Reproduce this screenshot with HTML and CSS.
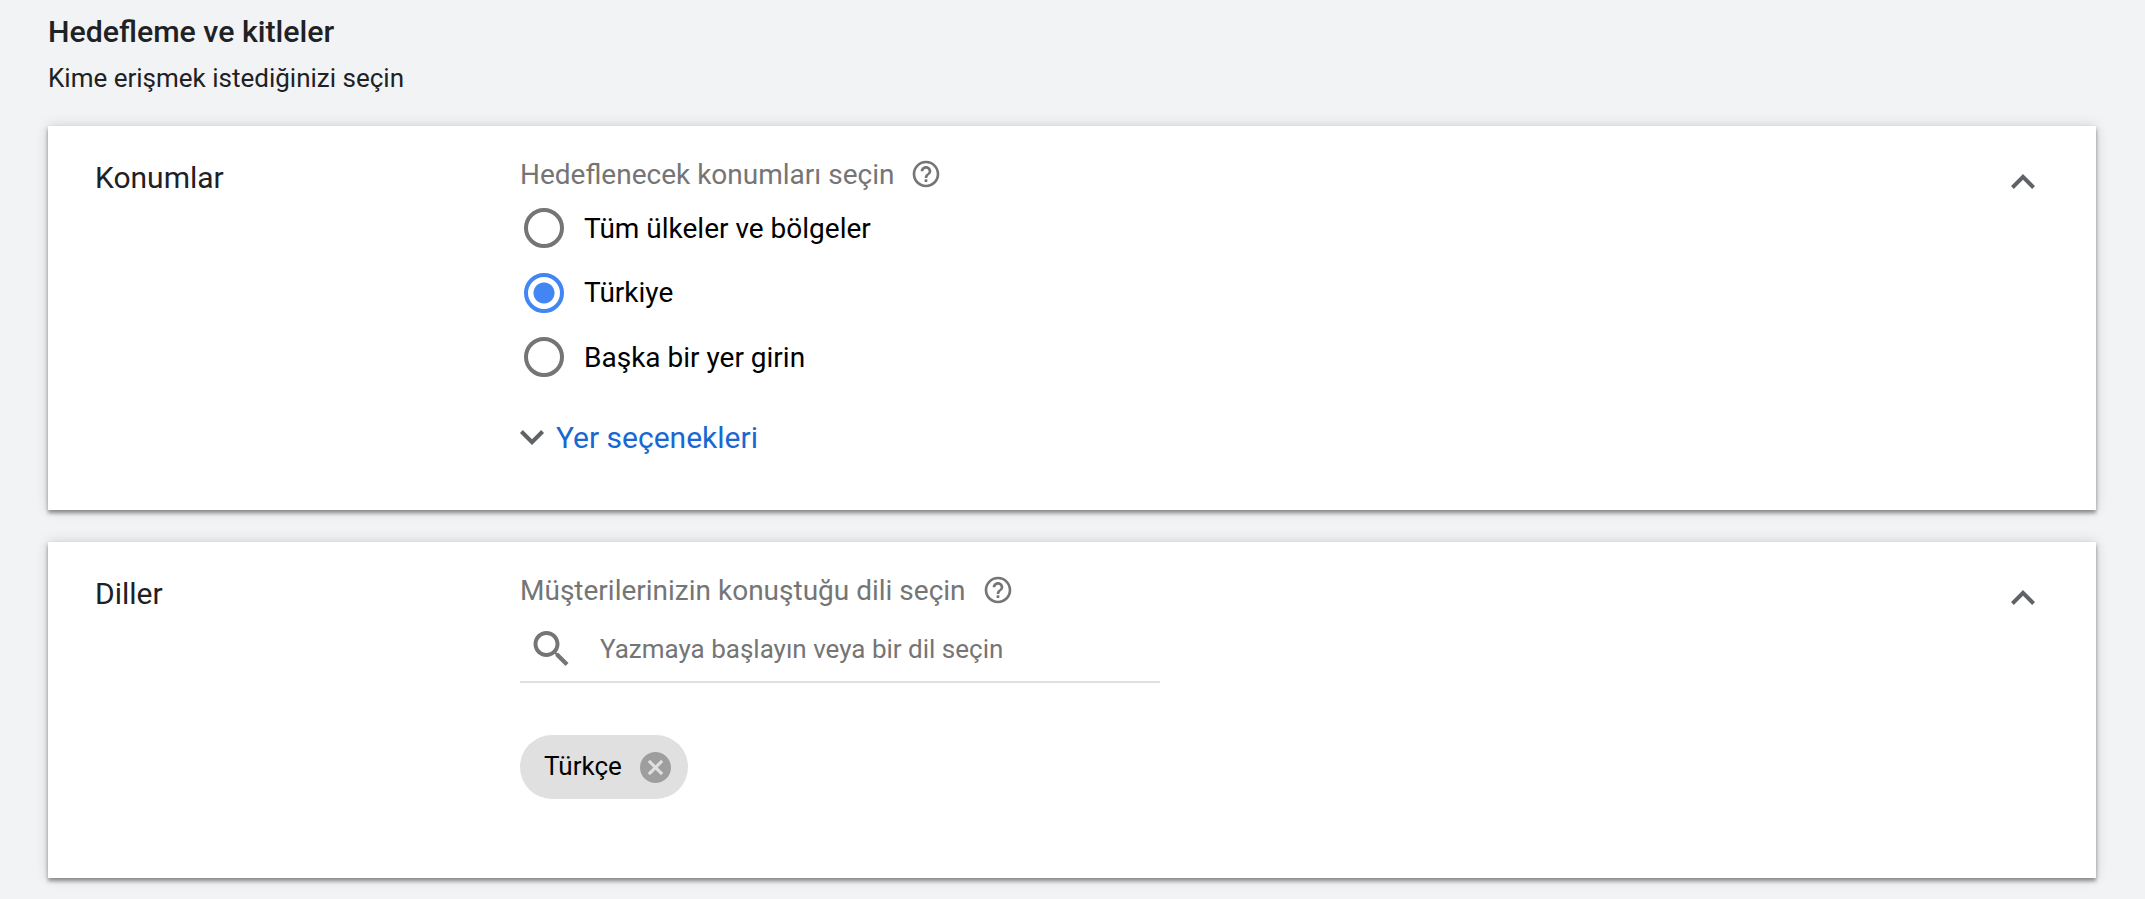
FILE: index.html
```html
<!DOCTYPE html>
<html lang="tr">
<head>
    <meta charset="UTF-8">
    <meta name="viewport" content="width=device-width, initial-scale=1.0">
    <title>Hedefleme ve kitleler</title>
    <link rel="stylesheet" href="styles.css">
</head>
<body>
    <header class="page-header">
        <h1 class="page-title">Hedefleme ve kitleler</h1>
        <p class="page-subtitle">Kime erişmek istediğinizi seçin</p>
    </header>

    <section class="card card-locations">
        <h2 class="card-name">Konumlar</h2>
        <div class="card-body">
            <div class="field-label">
                <span>Hedeflenecek konumları seçin</span>
                <svg class="help-icon" viewBox="0 0 24 24"><path d="M11 18h2v-2h-2v2zm1-16C6.48 2 2 6.48 2 12s4.48 10 10 10 10-4.48 10-10S17.52 2 12 2zm0 18c-4.41 0-8-3.59-8-8s3.59-8 8-8 8 3.59 8 8-3.59 8-8 8zm0-14c-2.21 0-4 1.79-4 4h2c0-1.1.9-2 2-2s2 .9 2 2c0 2-3 1.75-3 5h2c0-2.25 3-2.5 3-5 0-2.21-1.79-4-4-4z"/></svg>
            </div>
            <div class="radio-list">
                <div class="radio-row"><span class="radio"></span><span>Tüm ülkeler ve bölgeler</span></div>
                <div class="radio-row"><span class="radio radio-on"></span><span>Türkiye</span></div>
                <div class="radio-row"><span class="radio"></span><span>Başka bir yer girin</span></div>
            </div>
            <div class="more-row">
                <svg class="more-icon" viewBox="6 8.59 12 7.41"><path d="M16.59 8.59L12 13.17 7.41 8.59 6 10l6 6 6-6z"/></svg>
                <a class="more-link">Yer seçenekleri</a>
            </div>
        </div>
        <svg class="collapse-icon" viewBox="6 8 12 7.41"><path d="M12 8l-6 6 1.41 1.41L12 10.83l4.59 4.58L18 14z"/></svg>
    </section>

    <section class="card card-languages">
        <h2 class="card-name">Diller</h2>
        <div class="card-body">
            <div class="field-label">
                <span>Müşterilerinizin konuştuğu dili seçin</span>
                <svg class="help-icon" viewBox="0 0 24 24"><path d="M11 18h2v-2h-2v2zm1-16C6.48 2 2 6.48 2 12s4.48 10 10 10 10-4.48 10-10S17.52 2 12 2zm0 18c-4.41 0-8-3.59-8-8s3.59-8 8-8 8 3.59 8 8-3.59 8-8 8zm0-14c-2.21 0-4 1.79-4 4h2c0-1.1.9-2 2-2s2 .9 2 2c0 2-3 1.75-3 5h2c0-2.25 3-2.5 3-5 0-2.21-1.79-4-4-4z"/></svg>
            </div>
            <div class="search-box">
                <svg class="search-icon" viewBox="3 3 17.49 17.49"><path d="M15.5 14h-.79l-.28-.27C15.41 12.59 16 11.11 16 9.5 16 5.91 13.09 3 9.5 3S3 5.91 3 9.5 5.91 16 9.5 16c1.61 0 3.09-.59 4.23-1.57l.27.28v.79l5 4.99L20.49 19l-4.99-5zm-6 0C7.01 14 5 11.99 5 9.5S7.01 5 9.5 5 14 7.01 14 9.5 11.99 14 9.5 14z"/></svg>
                <span class="search-text">Yazmaya başlayın veya bir dil seçin</span>
            </div>
            <div class="chip">
                <span class="chip-text">Türkçe</span>
                <svg class="chip-close" viewBox="2 2 20 20"><path d="M12 2C6.47 2 2 6.47 2 12s4.47 10 10 10 10-4.47 10-10S17.53 2 12 2zm5 13.59L15.59 17 12 13.41 8.41 17 7 15.59 10.59 12 7 8.41 8.41 7 12 10.59 15.59 7 17 8.41 13.41 12 17 15.59z"/></svg>
            </div>
        </div>
        <svg class="collapse-icon" viewBox="6 8 12 7.41"><path d="M12 8l-6 6 1.41 1.41L12 10.83l4.59 4.58L18 14z"/></svg>
    </section>
</body>
</html>
```

FILE: styles.css
```css
body {
    margin: 0;
    height: 899px;
    overflow: hidden;
    padding: 0 49px 0 48px;
    background-color: #f1f3f4;
    font-family: Roboto, sans-serif;
    color: #202124;
}
.page-header {
    height: 126px;
}
.page-title {
    margin: 0;
    padding-top: 15px;
    font-size: 30.3px;
    line-height: 34px;
    font-weight: 500;
}
.page-subtitle {
    margin: 0;
    padding-top: 13px;
    font-size: 26px;
    line-height: 32px;
}
.card {
    display: flex;
    background-color: white;
    padding: 0 48px 0 47px;
    box-shadow: 0 3px 4px rgba(0, 0, 0, 0.4), 0 0 12px rgba(0, 0, 0, 0.15);
}
.card-locations {
    height: 384px;
    margin-bottom: 32px;
}
.card-languages {
    height: 336px;
}
.card-name {
    width: 425px;
    flex-shrink: 0;
    margin: 0;
    padding-top: 34px;
    font-size: 30px;
    line-height: 36px;
    font-weight: 400;
}
.card-body {
    flex: 1;
    padding-top: 32px;
}
.field-label {
    display: flex;
    align-items: center;
    gap: 16px;
    height: 32px;
    font-size: 28px;
    color: #757575;
}
.help-icon {
    width: 32px;
    height: 32px;
    fill: #757575;
}
.radio-list {
    margin-top: 18px;
    display: flex;
    flex-direction: column;
    gap: 24.5px;
}
.radio-row {
    display: flex;
    align-items: center;
    height: 40px;
    padding-left: 4px;
    gap: 20px;
    font-size: 28px;
    color: black;
}
.radio {
    box-sizing: border-box;
    width: 40px;
    height: 40px;
    border: 4px solid #757575;
    border-radius: 50%;
}
.radio-on {
    border-color: #4285f4;
    background: radial-gradient(circle, #4285f4 10px, white 11px);
}
.more-row {
    display: flex;
    align-items: center;
    gap: 12px;
    margin-top: 40px;
    height: 40px;
}
.more-icon {
    width: 24px;
    height: 15px;
    fill: #5f6368;
}
.more-link {
    font-size: 30px;
    color: #1967d2;
}
.collapse-icon {
    flex-shrink: 0;
    width: 24px;
    height: 15px;
    margin: 48px 13px 0 0;
    fill: #5f6368;
}
.search-box {
    display: flex;
    align-items: center;
    gap: 31px;
    box-sizing: border-box;
    width: 640px;
    height: 67px;
    margin-top: 10px;
    padding-left: 13px;
    border-bottom: 2px solid #e0e0e0;
}
.search-icon {
    width: 36px;
    height: 35px;
    fill: #757575;
}
.search-text {
    font-size: 26px;
    color: #757575;
}
.chip {
    display: inline-flex;
    align-items: center;
    gap: 18px;
    box-sizing: border-box;
    width: 168px;
    height: 64px;
    margin-top: 52px;
    padding-left: 24px;
    border-radius: 32px;
    background-color: #e0e0e0;
    font-size: 26px;
    color: black;
}
.chip-text {
    margin-bottom: 3px;
}
.chip-close {
    width: 31px;
    height: 31px;
    margin-top: 1px;
    fill: #9e9e9e;
}
```
